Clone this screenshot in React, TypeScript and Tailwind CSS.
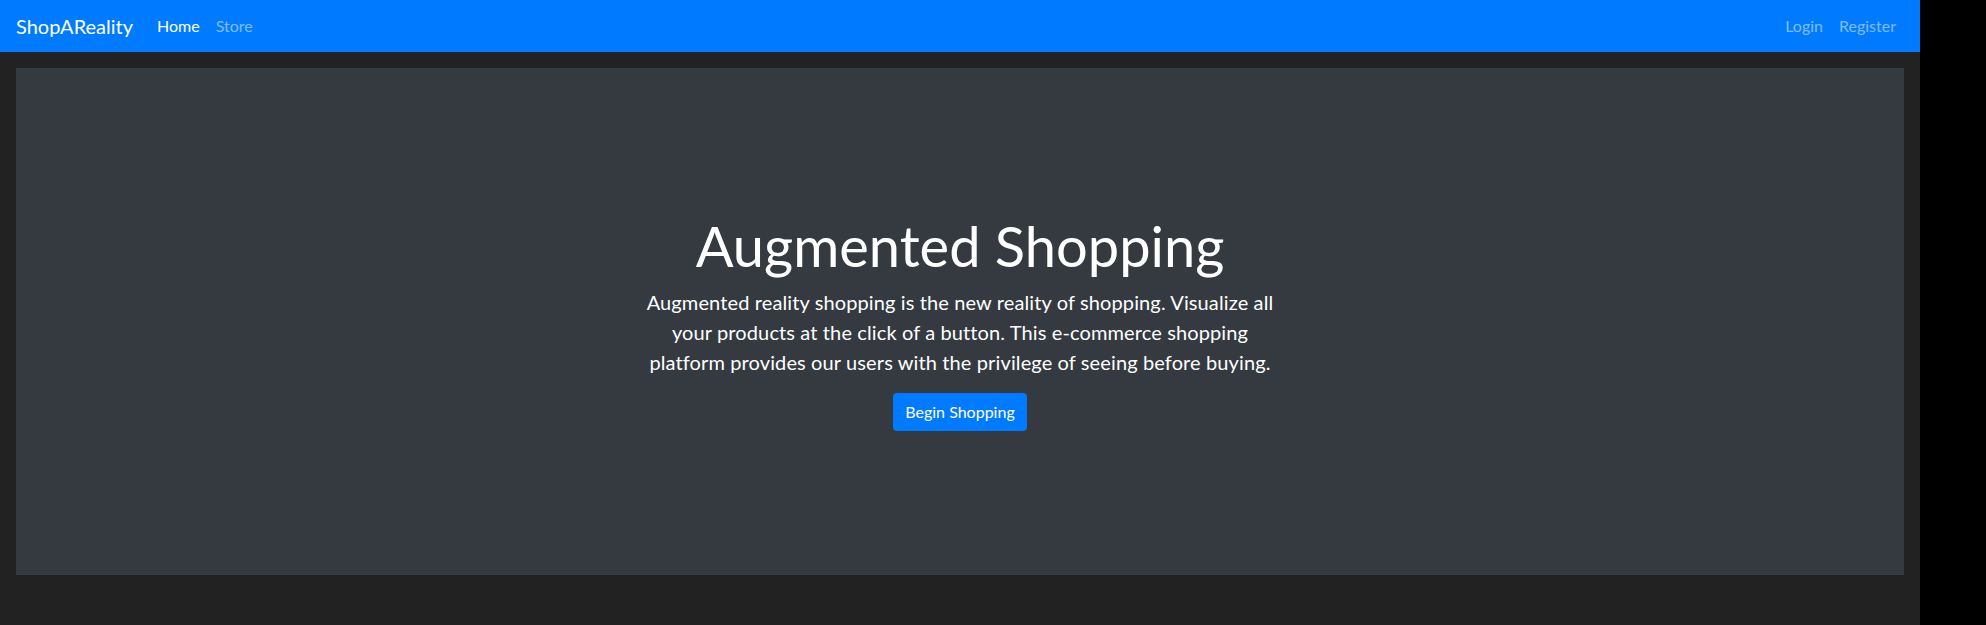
import React from "react";

const font = { fontFamily: '"Segoe UI", Lato, "Liberation Sans", sans-serif' };

export default function App() {
  return (
    <div className="min-h-screen w-full bg-black" style={font}>
      <div className="w-[1920px] min-h-[625px] bg-[#222222] flex flex-col">
        {/* Navbar */}
        <nav className="h-[52px] bg-[#007bff] px-4 flex items-center">
          <a href="#" className="text-white text-[20px] leading-[30px] mr-4">
            ShopAReality
          </a>
          <div className="flex items-center text-[16px] leading-6">
            <a href="#" className="px-2 text-white">Home</a>
            <a href="#" className="px-2 text-white/50">Store</a>
          </div>
          <div className="ml-auto flex items-center text-[16px] leading-6">
            <a href="#" className="px-2 text-white/50">Login</a>
            <a href="#" className="px-2 text-white/50">Register</a>
          </div>
        </nav>

        {/* Hero */}
        <section className="mx-4 mt-4 h-[507px] bg-[#343a40] flex flex-col items-center justify-center text-center text-white">
          <h1 className="text-[56px] leading-[1.2] font-normal mb-2">Augmented Shopping</h1>
          <p className="max-w-[650px] text-[20px] leading-[30px] tracking-[0.12px] mb-4">
            Augmented reality shopping is the new reality of shopping. Visualize all your products at the click of a
            button. This e-commerce shopping platform provides our users with the privilege of seeing before buying.
          </p>
          <button className="h-[38px] px-3 rounded bg-[#007bff] text-white text-[16px] leading-6">
            Begin Shopping
          </button>
        </section>
      </div>
    </div>
  );
}
